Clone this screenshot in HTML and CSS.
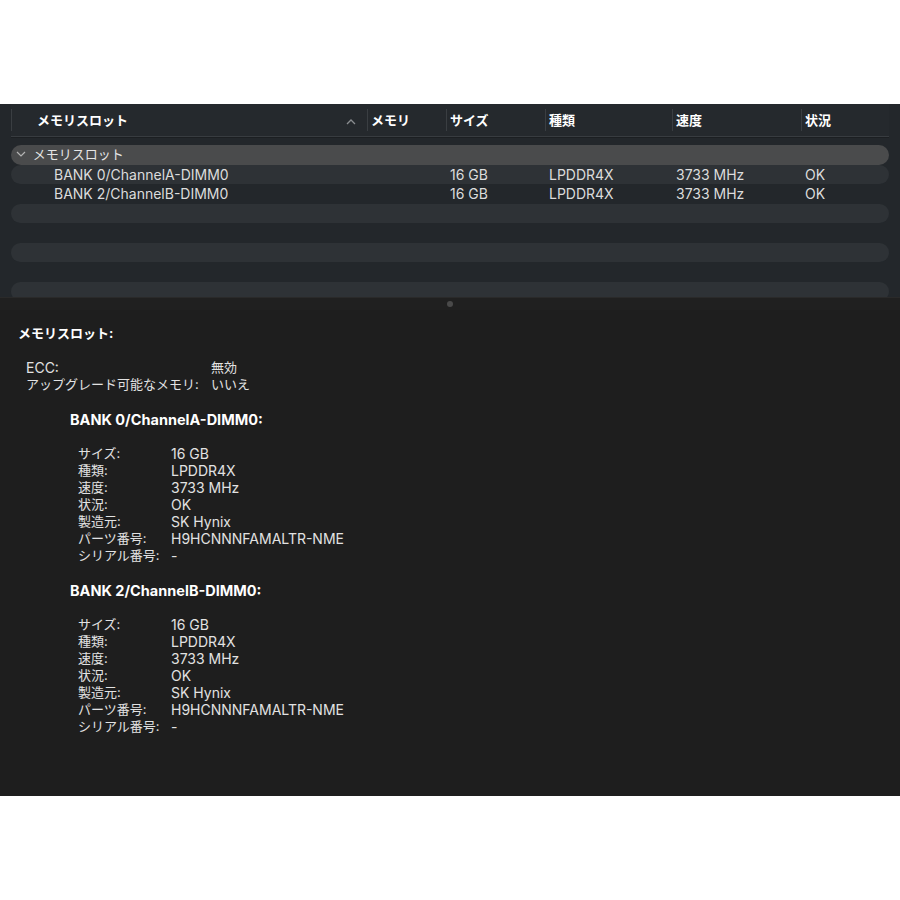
FILE: index.html
```html
<!DOCTYPE html>
<html>
<head>
    <meta charset="utf-8">
    <title>メモリ</title>
    <link rel="stylesheet" href="styles.css">
</head>
<body>
    <div class="window">
        <div class="table-pane">
            <div class="table-head cols">
                <div class="th th-name">メモリスロット<span class="sort">
                    <svg width="10" height="6" viewBox="0 0 10 6"><path d="M1 5 L5 1 L9 5" fill="none" stroke="#8a8d90" stroke-width="1.3"/></svg>
                </span></div>
                <div class="th">メモリ</div>
                <div class="th">サイズ</div>
                <div class="th">種類</div>
                <div class="th">速度</div>
                <div class="th">状況</div>
            </div>
            <div class="table-body">
                <div class="row group cols">
                    <div class="td td-group">
                        <svg class="chev" width="10" height="6" viewBox="0 0 10 6"><path d="M1 1 L5 5 L9 1" fill="none" stroke="#b4b4b4" stroke-width="1.2"/></svg>
                        メモリスロット
                    </div>
                    <div class="td"></div><div class="td"></div><div class="td"></div><div class="td"></div><div class="td"></div>
                </div>
                <div class="row stripe cols">
                    <div class="td td-item">BANK 0/ChannelA-DIMM0</div>
                    <div class="td"></div>
                    <div class="td">16 GB</div>
                    <div class="td">LPDDR4X</div>
                    <div class="td">3733 MHz</div>
                    <div class="td">OK</div>
                </div>
                <div class="row cols">
                    <div class="td td-item">BANK 2/ChannelB-DIMM0</div>
                    <div class="td"></div>
                    <div class="td">16 GB</div>
                    <div class="td">LPDDR4X</div>
                    <div class="td">3733 MHz</div>
                    <div class="td">OK</div>
                </div>
                <div class="row stripe"></div>
                <div class="row"></div>
                <div class="row stripe"></div>
                <div class="row"></div>
                <div class="row stripe"></div>
            </div>
        </div>

        <div class="splitter"><span class="grip"></span></div>

        <div class="detail">
            <div class="title">メモリスロット:</div>
            <div class="kv kv-top">
                <span class="en">ECC:</span><span>無効</span>
                <span>アップグレード可能なメモリ:</span><span>いいえ</span>
            </div>

            <div class="bank">
                <div class="title en">BANK 0/ChannelA-DIMM0:</div>
                <div class="kv kv-bank">
                    <span>サイズ:</span><span class="en">16 GB</span>
                    <span>種類:</span><span class="en">LPDDR4X</span>
                    <span>速度:</span><span class="en">3733 MHz</span>
                    <span>状況:</span><span class="en">OK</span>
                    <span>製造元:</span><span class="en">SK Hynix</span>
                    <span>パーツ番号:</span><span class="en">H9HCNNNFAMALTR-NME</span>
                    <span>シリアル番号:</span><span class="en">-</span>
                </div>
            </div>

            <div class="bank">
                <div class="title en">BANK 2/ChannelB-DIMM0:</div>
                <div class="kv kv-bank">
                    <span>サイズ:</span><span class="en">16 GB</span>
                    <span>種類:</span><span class="en">LPDDR4X</span>
                    <span>速度:</span><span class="en">3733 MHz</span>
                    <span>状況:</span><span class="en">OK</span>
                    <span>製造元:</span><span class="en">SK Hynix</span>
                    <span>パーツ番号:</span><span class="en">H9HCNNNFAMALTR-NME</span>
                    <span>シリアル番号:</span><span class="en">-</span>
                </div>
            </div>
        </div>
    </div>
</body>
</html>
```

FILE: styles.css
```css
*{padding: 0;margin: 0;box-sizing: border-box;}
body{
    background: #fff;
    font-family: Inter, "Noto Sans CJK JP", sans-serif;
    font-size: 13px;
}
/* latin runs are set a size up so they sit with the kana */
.en{font-size: 14px;}
.title.en{font-size: 14.5px;}

.window{
    margin-top: 104px;
    height: 692px;
    display: flex;
    flex-direction: column;
    background: #1e1e1e;
}

/* list of slots */
.table-pane{
    height: 193px;
    background: #23272b;
    overflow: hidden;
}
.cols{
    display: grid;
    grid-template-columns: 356px 79px 99px 127px 129px 1fr;
    margin-left: 11px;
    width: 878px;
}
.table-head{
    height: 33px;
    align-items: center;
    background: #25292d;
    border-bottom: 1px solid #383c40;
    box-shadow: 0 1px 0 #1c1f22;
}
.th{
    height: 22px;
    line-height: 22px;
    border-left: 1px solid #3a3e42;
    padding-left: 3px;
    color: #fff;
    font-weight: bold;
}
.th-name{
    position: relative;
    padding-left: 25px;
}
.sort{
    position: absolute;
    right: 11px;
    top: 0;
}
.table-body{
    padding-top: 8px;
}
.row{
    height: 19.5px;
    line-height: 19.5px;
    border-radius: 10px;
    color: #dcdcdc;
}
.table-body > .row{
    margin-left: 11px;
    width: 878px;
}
.stripe{background: #2e3236;}
.group{background: #4a4b4c;}
.td{
    padding-left: 4px;
    white-space: nowrap;
    font-size: 14px;
}
.td-group{
    padding-left: 5px;
    color: #e6e6e6;
    font-size: 13px;
}
.chev{
    vertical-align: middle;
    margin-right: 3px;
    position: relative;
    top: -1px;
}
.td-item{padding-left: 43px;}

.splitter{
    height: 13px;
    background: #202020;
    border-top: 1px solid #2a2a2a;
    display: flex;
    justify-content: center;
    align-items: center;
}
.grip{
    width: 6px;
    height: 6px;
    border-radius: 50%;
    background: #4a4a4a;
}

/* details below */
.detail{
    flex: 1;
    padding: 15px 0 0 18px;
    line-height: 17px;
    color: #e2e2e2;
}
.title{
    font-weight: bold;
    color: #fff;
}
.kv{
    display: grid;
    margin-top: 17px;
}
.kv-top{
    margin-left: 8px;
    grid-template-columns: 185px auto;
}
.bank{
    margin-left: 52px;
    margin-top: 18px;
}
.kv-bank{
    margin-left: 8px;
    grid-template-columns: 93px auto;
}
```
